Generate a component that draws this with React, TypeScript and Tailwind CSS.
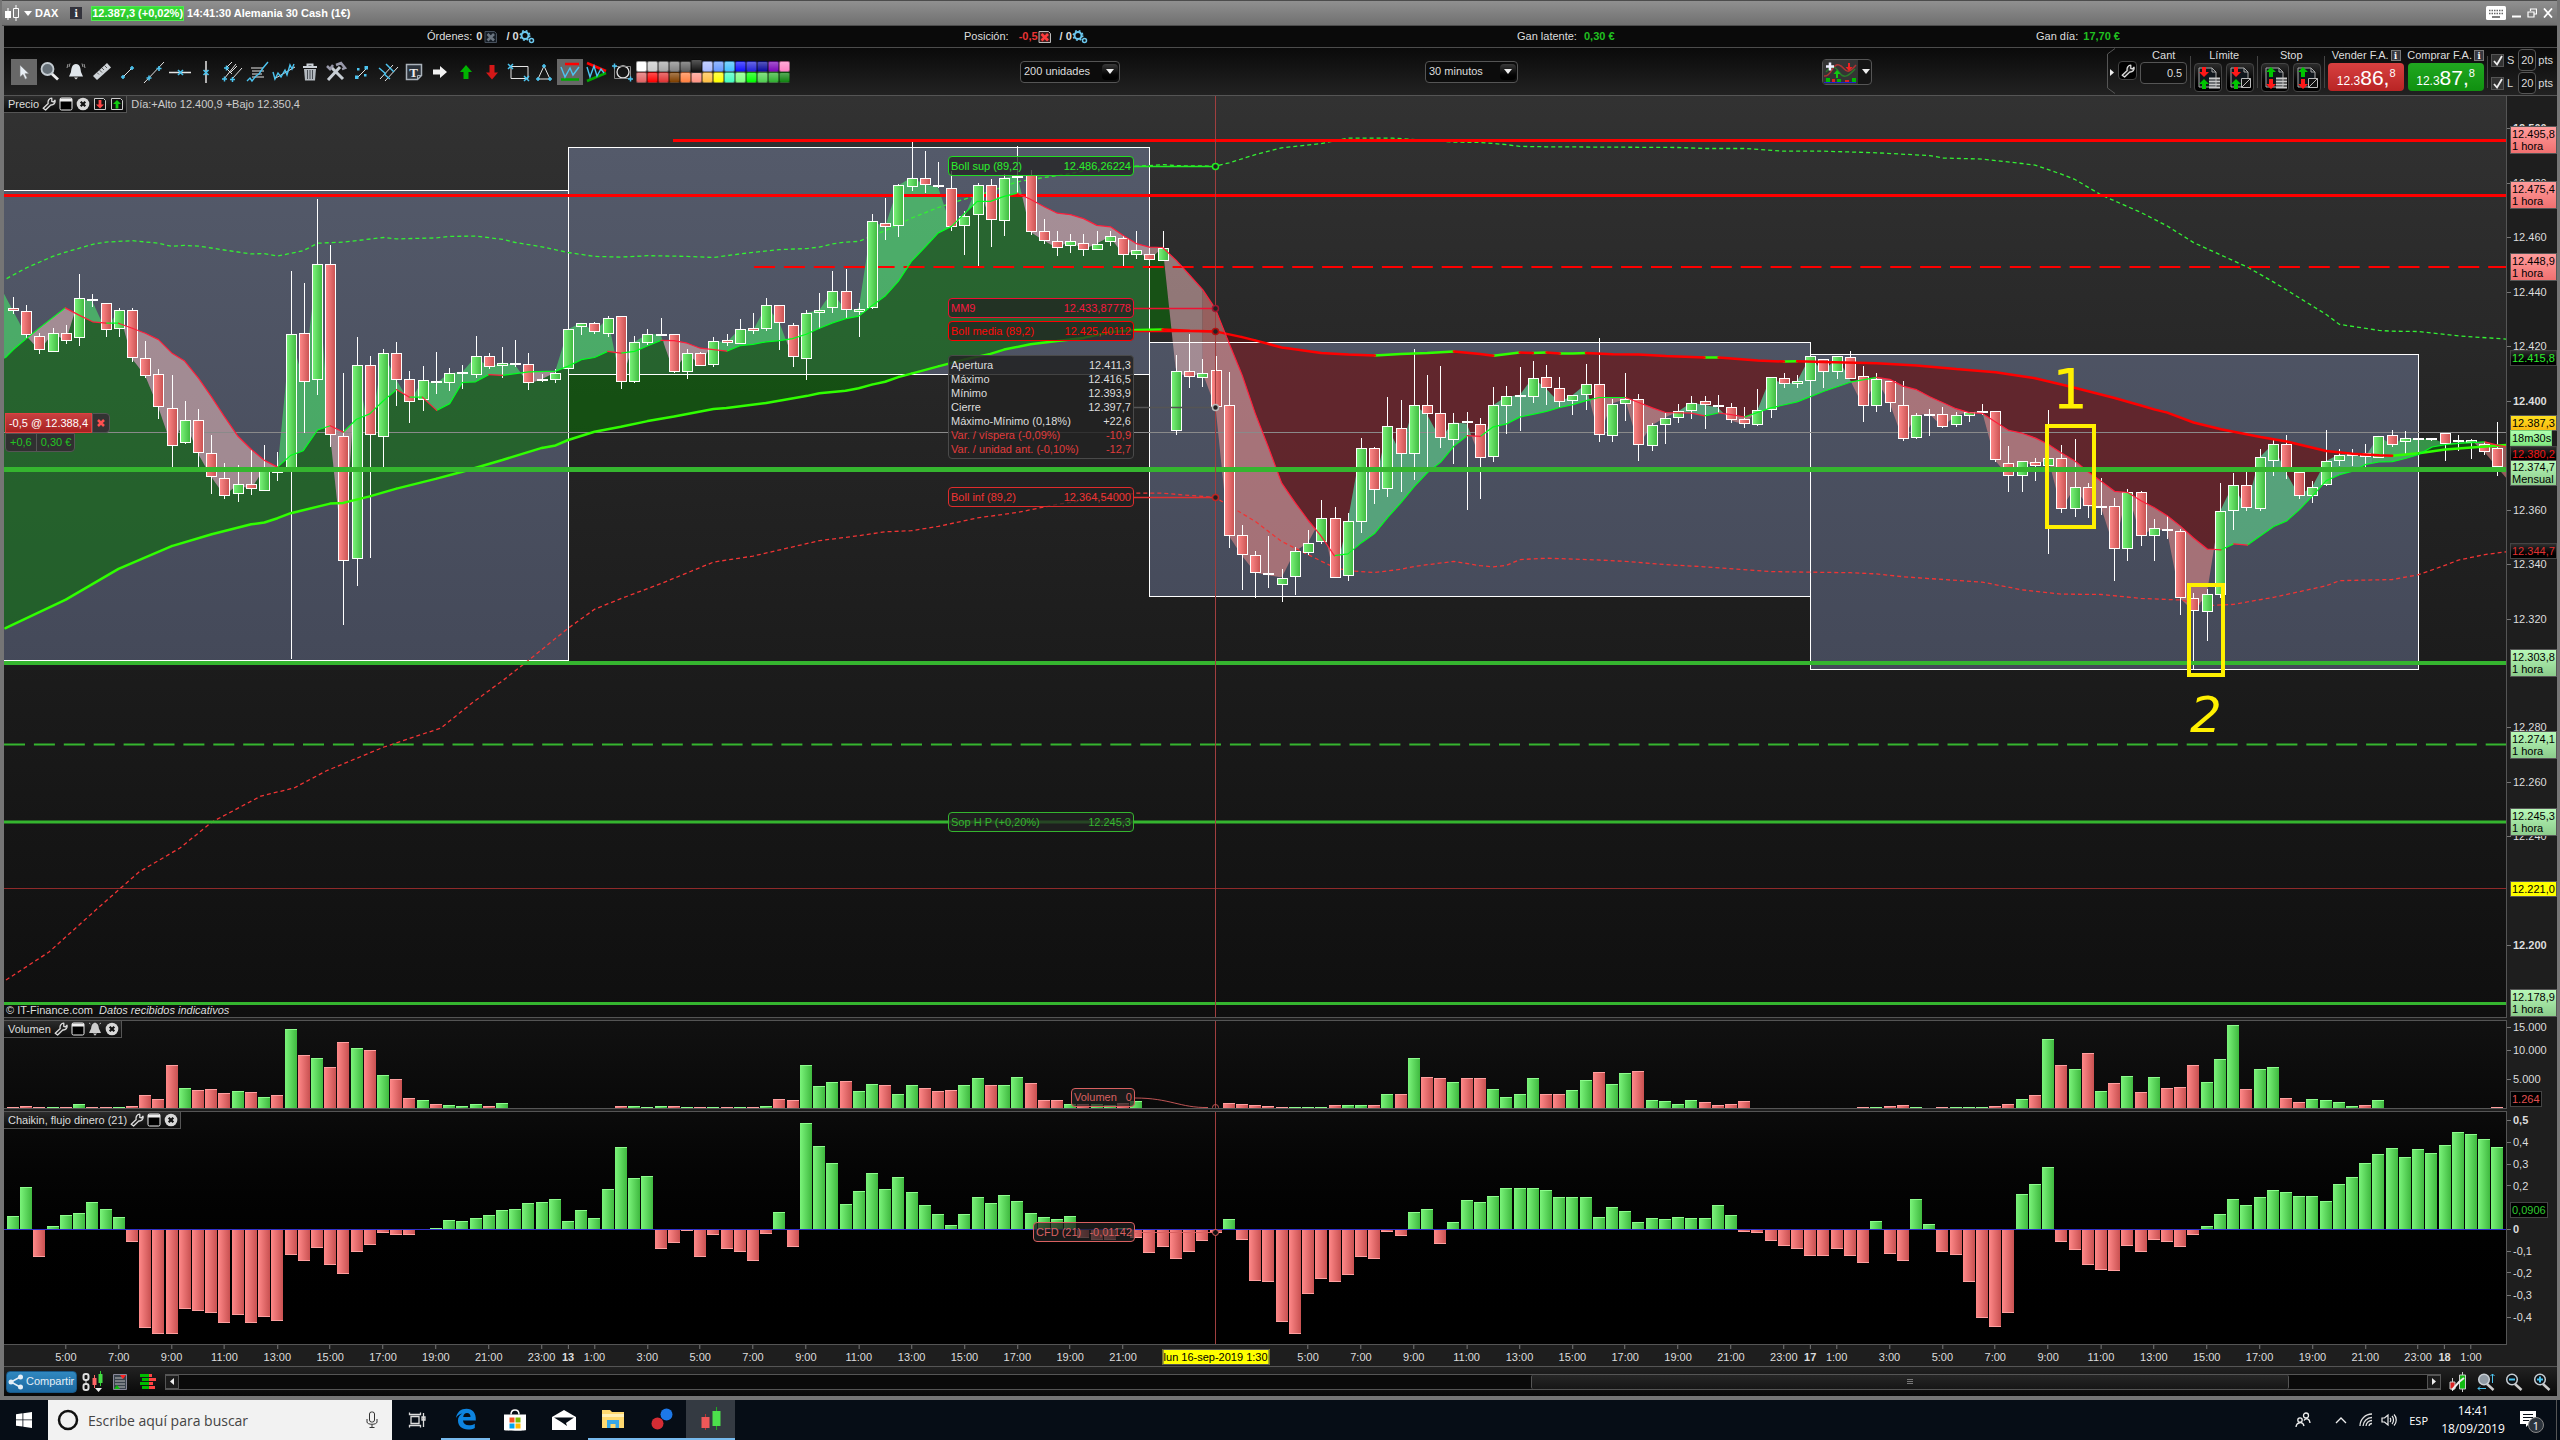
import type { CSSProperties, ReactNode } from 'react';

type Pt = [number, number];

interface Block {
  x0: number;
  y0: number;
  ky: number;
}

interface Candle {
  top: number;
  bottom: number;
  high: number;
  low: number;
  up: boolean;
}

/* Series are stored per block, each one with its own origin and scale */
const KX = 1.8233;
const A: Block = { x0: 0,    y0: 120, ky: 2.8 };
const B: Block = { x0: 850,  y0: 120, ky: 2.8 };
const C: Block = { x0: 1700, y0: 120, ky: 2.529 };

const slotX = (i: number) => 13 + 13.215 * i;

const nums = (s: string) => s.trim().split(/[\s,]+/).map(Number);

function track(block: Block, data: string): Pt[] {
  const n = nums(data);
  const out: Pt[] = [];
  for (let i = 0; i < n.length; i += 2) {
    out.push([block.x0 + n[i] / KX, block.y0 + n[i + 1] / block.ky]);
  }
  return out;
}

function candles(block: Block, data: string): Candle[] {
  return data.trim().split(';').map((row) => {
    const [side, ...v] = row.trim().split(' ');
    const [top, bottom, high, low] = v.map((n) => block.y0 + Number(n) / block.ky);
    return { top, bottom, high, low, up: side === 'g' };
  });
}

const CANDLES: Candle[] = [
  ...candles(A, `r 525 534 496 543;r 536 604 518 610;r 606 646 597 655;g 597 649 582 649;r 595 618 574 626;g 499 612 431 633;
    r 502 508 487 524;r 511 587 511 608;g 533 587 526 608;r 533 668 526 678;r 667 716 619 722;r 712 805 697 837;r 805 912 714 972;
    g 841 906 787 906;r 841 934 809 972;r 933 999 882 1047;r 1001 1052 960 1060;g 1020 1049 966 1070;r 1020 1035 925 1050;
    g 975 1038 910 1038;g 984 988 930 1011;g 600 987 423 1509;r 595 733 456 876;g 404 730 221 769;r 404 884 350 915;
    r 884 1234 708 1414;g 687 1231 608 1305;r 687 884 661 1226;g 651 887 641 972;r 651 727 622 801;r 726 789 703 848;
    g 729 786 689 815;r 732 738 650 767;g 709 738 694 758;g 706 710 685 753;g 662 716 605 722;r 662 693 652 697;
    g 679 688 636 722;r 681 686 616 692;r 684 738 652 756;g 726 728 712 734;g 707 727 697 736;g 586 699 586 703;
    g 567 579 567 602;r 567 593 565 600;g 555 601 549 607;r 550 735 548 752;g 622 735 605 735;g 600 626 586 630;
    g 600 604 554 606;r 600 705 598 709;g 651 705 641 724;r 653 688 650 690;g 618 685 608 692;r 615 623 600 633;
    g 584 626 557 628;r 581 590 541 600;g 519 587 498 590;r 519 568 519 644;r 575 665 569 691;g 539 668 531 728;
    g 533 542 484 585;g 480 528 423 540;r 480 534 417 558;g 528 537 512 608`),
  ...candles(B, `g 284 528 263 528;r 287 299 217 336;g 183 299 180 328;g 161 187 62 200;r 161 181 87 204;r 183 188 118 190;
    r 191 299 143 311;g 270 299 255 378;g 183 268 176 410;r 183 282 165 356;g 161 282 150 325;g 156 160 73 203;
    r 153 313 141 321;r 310 338 277 347;r 338 357 312 381;g 340 355 319 372;r 343 363 319 381;g 346 363 310 365;
    g 326 343 312 352;r 329 377 325 410;g 365 380 312 388;r 374 391 372 393;g 357 394 311 394;g 704 873 658 882;
    r 703 721 599 750;g 707 721 668 748;r 701 805 661 810;r 797 1164 706 1199;r 1163 1220 1134 1316;r 1217 1267 1207 1338;
    r 1269 1275 1165 1309;g 1281 1301 1257 1350;g 1208 1281 1196 1330;g 1183 1210 1148 1218;g 1115 1181 1064 1187;
    r 1113 1281 1084 1281;g 1124 1279 1101 1291;g 919 1127 891 1155;r 917 1035 915 1075;g 858 1035 776 1056;
    r 861 934 785 1042;g 797 934 641 1008;r 799 825 713 975;r 821 892 689 918;g 847 895 820 963;r 844 850 818 1092;
    r 850 945 835 1061;g 799 945 748 958;g 774 803 746 880;g 771 775 692 872;g 721 775 676 792;r 720 752 685 798;
    r 751 791 720 805;g 771 788 769 827;g 740 772 683 812;r 740 884 610 902;g 794 884 780 902;g 782 797 708 842;
    r 782 911 766 955;g 855 914 848 927;g 833 853 819 907;g 816 836 796 848;g 791 814 773 836;r 788 798 773 865`),
  ...candles(C, `r 721 727 695 742;r 727 760 716 766;r 757 770 727 780;g 734 773 680 775;g 651 735 651 754;r 653 669 640 678;
    g 661 669 646 678;g 598 661 598 664;r 605 639 605 678;g 598 639 596 654;r 600 656 584 656;r 648 725 621 765;
    g 656 725 640 738;r 659 715 659 738;r 722 808 659 812;g 747 805 740 807;g 743 745 730 798;r 744 776 726 780;
    g 747 773 739 776;g 739 750 739 765;g 737 740 718 747;r 737 861 737 864;r 868 902 824 941;g 863 902 863 942;
    r 866 875 855 913;g 856 875 733 1098;r 856 985 823 994;g 929 985 807 1004;r 929 977 917 1006;r 977 979 905 1000;
    r 975 1083 957 1166;g 940 1083 932 1115;r 940 1051 937 1078;g 1033 1053 1010 1115;r 1035 1040 1002 1060;
    r 1040 1210 1035 1251;r 1210 1243 1195 1390;g 1200 1246 1185 1318;g 990 1202 918 1208;g 922 987 893 1037;
    r 924 983 890 990;g 853 985 832 989;g 820 863 805 900;r 820 892 797 908;r 889 950 889 958;g 927 950 912 968;
    g 863 924 784 926;g 846 861 832 874;g 845 847 832 875;r 843 853 819 880;g 798 853 798 856;r 797 822 784 826;
    g 803 812 787 846;r 803 808 797 812;g 804 807 804 812;r 791 818 791 862;r 810 815 797 836;g 810 818 808 857;
    r 820 839 815 846;r 830 879 765 900`),
];

const MM9: Pt[] = [
  ...track(A, `10,665 25,642 48,612 72,582 119,526 145,547 169,565 193,569 216,569 241,583 265,597 289,615 313,652 336,674
    362,723 386,776 409,830 433,884 458,922 482,953 506,972 530,939 553,926 579,868 602,856 626,874 650,838 674,823 699,786
    723,755 746,776 770,776 796,813 820,794 843,735 867,733 891,713 916,715 964,705 1013,703 1036,689 1060,671 1084,665
    1108,648 1132,653 1157,648 1181,632 1205,617 1229,618 1253,625 1277,639 1325,647 1349,632 1373,628 1397,621 1421,618
    1445,612 1470,600 1494,583 1518,568 1542,556`),
  ...track(B, `16,549 40,520 64,493 88,452 112,396 137,356 161,316 185,298 208,263 232,228 256,228 281,214 305,205 329,222
    354,243 378,261 402,265 426,276 450,295 475,299 499,324 522,346 546,356 570,357 595,393 619,434 643,475 666,528 691,624
    715,714 739,822 763,917 787,1016 811,1070 835,1120 859,1165 883,1220 908,1215 932,1184 957,1157 981,1112 1004,1073
    1029,1026 1053,987 1077,958 1101,913 1125,884 1149,886 1173,859 1197,851 1221,832 1245,824 1270,816 1294,805 1318,797
    1342,786 1366,777 1390,777 1414,777 1438,791 1463,806 1487,819 1534,821`),
  ...track(C, `8,748 34,741 57,745 81,751 129,728 177,713 226,686 274,663 322,651 346,656 370,673 395,682 419,700 443,715
    467,730 491,740 515,742 539,764 563,785 587,792 611,804 635,820 659,842 683,862 708,890 732,914 756,939 780,942 804,963
    828,980 852,1001 876,1027 900,1057 925,1085 950,1087 973,1072 998,1075 1046,1028 1070,1014 1094,984 1118,949 1142,912
    1166,897 1190,888 1214,871 1238,865 1262,864 1286,856 1310,846 1335,827 1359,821 1383,818 1407,816 1431,814 1455,823 1470,826`),
];

const MEDIA: Pt[] = [
  ...track(A, `10,1423 120,1343 216,1257 313,1193 386,1160 458,1132 482,1127 506,1115 530,1101 602,1074 626,1072 674,1054
    723,1032 796,1004 843,985 916,952 988,918 1013,911 1036,896 1084,873 1132,859 1181,843 1229,830 1301,809 1325,806
    1397,792 1470,773 1494,765 1542,758`),
  ...track(B, `16,751 40,741 64,733 88,720 112,710 161,690 208,671 256,655 281,643 329,628 378,619 426,610 475,594 522,588
    570,587 619,590 666,592 715,608 739,617 787,637 811,642 859,652 908,657 957,659 1004,655 1053,652 1101,648 1149,655
    1173,660 1221,651 1245,652 1270,651 1294,654 1318,654 1342,652 1390,656 1438,657 1487,661`),
  ...track(C, `8,601 34,601 105,608 153,611 177,610 226,612 322,615 395,621 467,630 539,638 587,648 611,653 659,669 683,677
    756,703 804,722 828,732 852,740 900,765 950,782 1022,802 1070,813 1142,837 1190,844 1238,848 1262,849 1310,843 1359,833
    1407,828 1470,822`),
];

const BOLL_SUP: Pt[] = [
  ...track(A, `12,444 48,414 96,382 120,370 169,348 193,342 241,338 289,345 313,354 336,351 362,353 409,364 458,375 482,374
    506,381 553,366 579,345 626,342 699,329 723,333 796,330 820,326 867,325 916,334 940,343 988,355 1036,371 1084,382
    1132,384 1181,380 1253,382 1301,385 1349,375 1421,363 1470,360 1494,356 1518,347 1542,342`),
  ...track(B, `16,340 64,310 112,275 161,245 208,222 256,200 305,173 354,161 402,150 450,135 540,128 572,125 595,128 666,129
    691,120 739,97 787,78 859,66 908,51 990,51 1101,62 1149,63 1197,69 1221,74 1270,75 1510,77`),
  ...track(C, `8,72 81,72 153,79 226,79 322,83 419,90 443,96 515,99 587,110 611,114 659,137 683,150 732,190 804,234 852,268
    900,310 998,372 1046,410 1142,492 1166,517 1238,532 1262,534 1310,535 1383,546 1470,554`),
];

const BOLL_INF: Pt[] = [
  [6, 980], [49, 952], [98, 908], [139, 872], [180, 848], [212, 822], [261, 796], [294, 788], [326, 771],
  [384, 747], [441, 728], [472, 703],
  ...track(A, `918,1568 970,1505 1036,1423 1084,1370 1132,1340 1205,1298 1301,1238 1373,1221 1494,1178`),
  ...track(B, `16,1164 64,1153 112,1150 161,1138 232,1114 305,1099 378,1076 450,1060 522,1045 570,1045 619,1051 666,1057
    739,1124 787,1180 835,1217 883,1253 908,1262 957,1267 1004,1258 1029,1250 1101,1236 1149,1248 1173,1251 1197,1247
    1221,1231 1270,1227 1366,1232 1414,1236 1487,1245`),
  ...track(C, `8,1130 129,1142 274,1145 322,1148 370,1155 443,1162 515,1169 587,1188 659,1199 732,1200 804,1210 876,1214
    925,1228 973,1225 1046,1207 1142,1178 1166,1165 1262,1162 1310,1150 1359,1126 1383,1113 1431,1099 1470,1092`),
];

/* Negative = red bar */
const VOLUME = nums(`-1 -2 -1 1 -1 4 -1 -1 1 -2 -13 -9 -43 20 -18 -19 -15 17 -16 11 -13 79 -53 50 -41 -66 60 -58 33 -29 -10 8 -4 3
  2 4 -2 5 0 0 0 0 0 0 0 0 -2 2 1 2 -2 1 -1 1 -1 1 -1 2 -9 -8 43 22 26 -27 17 24 -23 14 23 -20 -17 -18 23 30 -23 23 31 -25 -8 -8
  4 -4 4 3 -5 7 0 0 0 0 0 0 -5 -4 -3 -2 -1 1 1 1 -3 3 3 -3 14 -14 50 -31 -30 26 -30 -30 19 11 14 30 -14 -14 18 28 -36 24 35 -37
  8 7 4 8 -6 -3 -4 -7 0 0 0 0 0 0 0 0 -1 1 -2 -3 1 0 -1 1 1 1 -2 -4 9 -13 69 -43 39 -55 17 -25 32 -16 31 -20 -21 -43 26 49 83
  -19 39 41 -10 -6 9 8 6 2 -3 8 0 0 0 0 0 0 0 0 -1`);

const CHAIKIN = nums(`13 42 -27 3 14 16 27 20 12 -12 -98 -104 -104 -79 -81 -83 -93 -85 -93 -87 -91 -25 -31 -18 -35 -44 -22 -15 -3
  -5 -5 0 1 9 8 11 14 19 20 26 27 30 8 19 11 40 82 51 53 -19 -13 -1 -27 -5 -19 -22 -31 -4 17 -17 106 83 66 25 38 56 40 52 37 24
  15 4 15 32 26 34 28 16 12 10 13 -8 -10 -10 1 -8 -23 -17 -29 -22 -11 -3 10 -10 -51 -52 -92 -104 -64 -49 -52 -45 -27 -29 -2 -6
  17 20 -14 7 29 27 33 41 41 41 39 32 32 32 12 22 18 7 11 10 12 11 11 24 14 -2 -3 -11 -16 -19 -26 -26 -19 -26 -33 8 -24 -31 30
  5 -22 -25 -52 -88 -97 -83 35 45 62 -12 -20 -35 -40 -41 -16 -22 -10 -12 -17 -5 3 15 30 24 32 39 37 33 33 28 45 52 66 75 81 72
  80 76 84 97 95 90 82`);

const SESSIONS = [
  { x: 3,      y: 190.5, w: 565.5, h: 470 },
  { x: 568.5,  y: 147.5, w: 581,   h: 227 },
  { x: 1149.5, y: 342.5, w: 661,   h: 254 },
  { x: 1810.5, y: 354.5, w: 608,   h: 315 },
];

function valueAt(line: Pt[], x: number) {
  let k = 1;
  while (k < line.length - 1 && line[k][0] < x) k++;
  const [x1, y1] = line[k - 1];
  const [x2, y2] = line[k];
  return y1 + ((y2 - y1) * (x - x1)) / (x2 - x1);
}

const CLOSES: Pt[] = CANDLES.map((c, i) => [slotX(i), c.up ? c.top : c.bottom]);

/* Shaded areas: price against MM9, and the rest up to the Bollinger mean */
function buildBands() {
  const bands: { fill: string; d: string }[] = [];
  const run = (pick: (x: number) => { fill: string; a: number; b: number }) => {
    let fill = '';
    let upper: string[] = [];
    let lower: string[] = [];
    const flush = () => {
      if (upper.length > 1) bands.push({ fill, d: `M${upper.join('L')}L${lower.reverse().join('L')}Z` });
    };
    for (let x = 4; x <= 2506; x += 1.5) {
      const p = pick(x);
      const u = `${x.toFixed(1)} ${p.a.toFixed(1)}`;
      const l = `${x.toFixed(1)} ${p.b.toFixed(1)}`;
      if (p.fill !== fill) {
        if (fill) { upper.push(u); lower.push(l); }
        flush();
        fill = p.fill;
        upper = [];
        lower = [];
      }
      upper.push(u);
      lower.push(l);
    }
    flush();
  };

  run((x) => {
    const mean = valueAt(MEDIA, x);
    const ma = valueAt(MM9, x);
    const price = valueAt(CLOSES, x);
    const bull = (ma + price) / 2 < mean;
    const near = bull ? Math.min(mean, Math.max(ma, price)) : Math.max(mean, Math.min(ma, price));
    return { fill: bull ? 'rgba(9,112,5,0.56)' : 'rgba(112,10,10,0.6)', a: mean, b: near };
  });
  run((x) => {
    const mean = valueAt(MEDIA, x);
    const ma = valueAt(MM9, x);
    const price = valueAt(CLOSES, x);
    const bull = (ma + price) / 2 < mean;
    const above = price < ma;
    const fill = above
      ? bull ? 'rgba(73,255,108,0.51)' : 'rgba(100,243,151,0.51)'
      : bull ? 'rgba(246,195,194,0.51)' : 'rgba(255,149,145,0.51)';
    return { fill, a: ma, b: price };
  });
  return bands;
}

const BANDS = buildBands();

const path = (pts: Pt[]) => 'M' + pts.map(([x, y]) => `${x.toFixed(1)} ${y.toFixed(1)}`).join('L');

function SlopeLine({ pts, up, down, width }: { pts: Pt[]; up: string; down: string; width: number }) {
  let ups = '';
  let downs = '';
  for (let i = 1; i < pts.length; i++) {
    const seg = path([pts[i - 1], pts[i]]);
    if (pts[i][1] <= pts[i - 1][1]) ups += seg;
    else downs += seg;
  }
  return (
    <g fill="none" strokeWidth={width} strokeLinecap="round">
      <path d={ups} stroke={up} />
      <path d={downs} stroke={down} />
    </g>
  );
}

function Gradients({ id }: { id: string }) {
  return (
    <defs>
      <linearGradient id={`${id}-up`}>
        <stop offset="0" stopColor="#7bf47b" />
        <stop offset="1" stopColor="#3fb93f" />
      </linearGradient>
      <linearGradient id={`${id}-down`}>
        <stop offset="0" stopColor="#ff8989" />
        <stop offset="1" stopColor="#c95151" />
      </linearGradient>
      <linearGradient id={`${id}-session`} gradientUnits="userSpaceOnUse" x1="0" y1="147" x2="0" y2="670">
        <stop offset="0" stopColor="#545a6a" />
        <stop offset="1" stopColor="#444959" />
      </linearGradient>
    </defs>
  );
}

function PriceChart() {
  return (
    <svg viewBox="4 96 2502 921" preserveAspectRatio="none" className="absolute inset-0 w-full h-full">
      <Gradients id="p" />
      {SESSIONS.map((s) => (
        <rect key={s.x} x={s.x} y={s.y} width={s.w} height={s.h} fill="url(#p-session)" />
      ))}
      {BANDS.map((b, i) => <path key={i} d={b.d} fill={b.fill} />)}
      {SESSIONS.map((s) => (
        <rect key={s.x} x={s.x} y={s.y} width={s.w} height={s.h} fill="none" stroke="#fff" />
      ))}

      <path d={path(BOLL_SUP)} fill="none" stroke="#33f033" strokeWidth="1.3" strokeDasharray="4 3" />
      <path d={path(BOLL_INF)} fill="none" stroke="#f03434" strokeWidth="1.3" strokeDasharray="4 3" />

      {/* Niveles */}
      <path d="M4 432.5H2506" stroke="#8a8a8a" />
      <path d="M4 888.5H2506" stroke="#8f2a2a" />
      <path d="M673 140.5H2506M4 195.5H2506" stroke="#ff0000" strokeWidth="3" />
      <path d="M754 267H2506" stroke="#ff0000" strokeWidth="2" strokeDasharray="21 8.9" />

      <g shapeRendering="crispEdges" stroke="#fff">
        {CANDLES.map((c, i) => {
          const x = Math.round(slotX(i)) + 0.5;
          const top = Math.round(c.top) + 0.5;
          return (
            <g key={i}>
              <path d={`M${x} ${c.high}V${c.low}`} />
              <rect x={x - 5} y={top} width={10} height={Math.max(1, Math.round(c.bottom - c.top) - 1)}
                    fill={c.up ? 'url(#p-up)' : 'url(#p-down)'} />
            </g>
          );
        })}
      </g>

      <SlopeLine pts={MEDIA} up="#30ff00" down="#ff0000" width={2.5} />
      <SlopeLine pts={MM9} up="#00ff1e" down="#ff1f3c" width={1.2} />

      <path d="M4 469.5H2506" stroke="#35b52f" strokeWidth="5" />
      <path d="M4 663H2506" stroke="#35b52f" strokeWidth="4" />
      <path d="M4 822H2506M4 1003.5H2506" stroke="#35b52f" strokeWidth="3" />
      <path d="M4 744.5H2506" stroke="#35b52f" strokeWidth="2" strokeDasharray="21 8.9" />

      {/* Cursor */}
      <path d="M1215.5 96V1017" stroke="#a03f3f" />
      <g strokeWidth="1.5" fill="#222">
        <path d="M1133 166.5H1212" stroke="#22ee22" />
        <circle cx="1215.5" cy="166.5" r="3" stroke="#22ee22" />
        <path d="M1133 308.5H1212" stroke="#ee1133" />
        <circle cx="1215.5" cy="308.5" r="3" stroke="#a01530" />
        <path d="M1133 331.5H1212" stroke="#ff0000" />
        <circle cx="1215.5" cy="331.5" r="3" stroke="#b01010" />
        <path d="M1133 407.5H1212" stroke="#555" />
        <circle cx="1215.5" cy="407.5" r="3" stroke="#bbb" />
        <path d="M1133 497.5H1212" stroke="#e03030" />
        <circle cx="1215.5" cy="497.5" r="3" stroke="#c02525" />
      </g>

      {/* Anotaciones */}
      <g fill="none" stroke="#fff000" strokeWidth="4">
        <rect x="2047" y="426" width="47" height="101" />
        <rect x="2189" y="585" width="34" height="90" />
      </g>
      <g fill="#fff000" fontFamily="DejaVu Sans, sans-serif" textAnchor="middle">
        <text x="2070" y="408" fontSize="56">1</text>
        <text x="2206" y="732" fontSize="50" fontStyle="italic">2</text>
      </g>
    </svg>
  );
}

function BarChart({ id, viewBox, base, values, cursorTo }: {
  id: string; viewBox: string; base: number; values: number[]; cursorTo: [number, number];
}) {
  const signed = id === 'c';
  return (
    <svg viewBox={viewBox} preserveAspectRatio="none" className="absolute inset-0 w-full h-full">
      <Gradients id={id} />
      <g shapeRendering="crispEdges">
        {values.map((v, i) => {
          if (v === 0) return null;
          const h = Math.abs(v);
          const x = Math.round(slotX(i)) - 6;
          const y = signed && v < 0 ? base + 1 : base - h;
          return (
            <g key={i}>
              <rect x={x} y={y} width={12} height={h} fill={v > 0 ? `url(#${id}-up)` : `url(#${id}-down)`} />
              <rect x={x} y={signed && v < 0 ? y + h - 1 : y} width={12} height={1} fill={v > 0 ? '#8dfc8d' : '#ffa0a0'} />
            </g>
          );
        })}
      </g>
      {signed && <path d="M4 1229.5H2506" stroke="#3030c8" />}
      <path d={`M1215.5 ${cursorTo[0]}V${cursorTo[1]}`} stroke="#a03f3f" />
      {signed ? (
        <g stroke="#d86060" fill="#111">
          <path d="M1135 1232.5H1212" />
          <circle cx="1215.5" cy="1232.5" r="3" />
        </g>
      ) : (
        <g stroke="#c05555" fill="none">
          <path d="M1135 1098C1170 1098 1180 1108 1208 1107.5" />
          <circle cx="1215.5" cy="1107.5" r="3" />
        </g>
      )}
    </svg>
  );
}

/* Chart coordinates to a place inside its panel */
const at = (x: number, y: number, top: number, height: number): CSSProperties => ({
  left: `${((x - 4) / 2502) * 100}%`,
  top: `${((y - top) / height) * 100}%`,
});

interface ReadoutProps {
  label: string;
  value: string;
  y: number;
  tone: string;
}

function Readout({ label, value, y, tone }: ReadoutProps) {
  return (
    <div style={at(948, y, 96, 921)}
         className={`absolute flex h-5 w-[186px] items-center justify-between rounded-sm border bg-[#222222]/75 px-0.5 ${tone}`}>
      <span>{label}</span>
      <span>{value}</span>
    </div>
  );
}

const READOUTS: ReadoutProps[] = [
  { label: 'Boll sup (89,2)',   value: '12.486,26224', y: 156, tone: 'border-[#22dd22] text-[#2cf02c]' },
  { label: 'MM9',               value: '12.433,87778', y: 298, tone: 'border-[#ee1133] text-[#f81840]' },
  { label: 'Boll media (89,2)', value: '12.425,40112', y: 321, tone: 'border-[#ff0000] text-[#ff0808]' },
  { label: 'Boll inf (89,2)',   value: '12.364,54000', y: 487, tone: 'border-[#e02c2c] text-[#f03434]' },
  { label: 'Sop H P (+0,20%)',  value: '12.245,3',     y: 812, tone: 'border-[#35b52f] text-[#35b52f]' },
];

const OHLC = [
  ['Apertura', '12.411,3'],
  ['Máximo', '12.416,5'],
  ['Mínimo', '12.393,9'],
  ['Cierre', '12.397,7'],
  ['Máximo-Mínimo (0,18%)', '+22,6'],
  ['Var. / víspera (-0,09%)', '-10,9'],
  ['Var. / unidad ant. (-0,10%)', '-12,7'],
];

interface Tick { y: number; label: string; bold?: boolean }

const PRICE_TICKS: Tick[] = [
  { y: 128, label: '12.500', bold: true }, { y: 183, label: '12.480' }, { y: 237, label: '12.460' },
  { y: 292, label: '12.440' }, { y: 346, label: '12.420' }, { y: 401, label: '12.400', bold: true },
  { y: 510, label: '12.360' }, { y: 564, label: '12.340' }, { y: 619, label: '12.320' },
  { y: 727, label: '12.280' }, { y: 782, label: '12.260' }, { y: 836, label: '12.240' },
  { y: 945, label: '12.200', bold: true },
];

const VOLUME_TICKS: Tick[] = [
  { y: 1027, label: '15.000' }, { y: 1050, label: '10.000' }, { y: 1079, label: '5.000' },
];

const CHAIKIN_TICKS: Tick[] = [
  { y: 1120, label: '0,5', bold: true }, { y: 1142, label: '0,4' }, { y: 1164, label: '0,3' }, { y: 1186, label: '0,2' },
  { y: 1229, label: '0', bold: true }, { y: 1251, label: '-0,1' }, { y: 1273, label: '-0,2' }, { y: 1295, label: '-0,3' },
  { y: 1317, label: '-0,4' },
];

const RED_TAG    = 'h-7 w-[47px] border-[#555] bg-linear-to-b from-[#ff9c9c] to-[#f07070] text-black';
const GREEN_TAG  = 'h-7 w-[47px] border-[#555] bg-linear-to-b from-[#b8f8b8] to-[#8ccc8c] text-black';
const DARK_TAG   = 'h-4 w-[47px] border-[#444] bg-linear-to-b from-[#303030] to-black';

const TAGS: { y: number; text: string; sub?: string; tone: string }[] = [
  { y: 126, text: '12.495,8', sub: '1 hora', tone: RED_TAG },
  { y: 181, text: '12.475,4', sub: '1 hora', tone: RED_TAG },
  { y: 253, text: '12.448,9', sub: '1 hora', tone: RED_TAG },
  { y: 350, text: '12.415,8', tone: `${DARK_TAG} text-[#2cf02c]` },
  { y: 446, text: '12.380,2', tone: `${DARK_TAG} text-[#f01515]` },
  { y: 415, text: '12.387,3', tone: 'h-4 w-[47px] border-[#555] bg-linear-to-b from-[#ffe020] to-[#f8b810] text-black' },
  { y: 460, text: '12.374,7', sub: 'Mensual', tone: 'h-[26px] w-[47px] border-[#555] bg-linear-to-b from-[#b8f8b8] to-[#8ccc8c] text-black' },
  { y: 430, text: '18m30s', tone: 'h-4 w-[42px] border-[#7c7] bg-linear-to-b from-[#b0ffb0] to-[#80e880] text-black' },
  { y: 543, text: '12.344,7', tone: `${DARK_TAG} text-[#e03030]` },
  { y: 649, text: '12.303,8', sub: '1 hora', tone: GREEN_TAG },
  { y: 731, text: '12.274,1', sub: '1 hora', tone: GREEN_TAG },
  { y: 808, text: '12.245,3', sub: '1 hora', tone: GREEN_TAG },
  { y: 881, text: '12.221,0', tone: 'h-4 w-[47px] border-[#555] bg-[#ffff00] text-black' },
  { y: 989, text: '12.178,9', sub: '1 hora', tone: GREEN_TAG },
];

function Axis({ ticks, top, height, children }: { ticks: Tick[]; top: number; height: number; children?: ReactNode }) {
  const pct = (y: number) => ({ top: `${((y - top) / height) * 100}%` });
  return (
    <div className="relative w-[50px] shrink-0 bg-[#1e1e1e]">
      {ticks.map((t) => (
        <div key={t.label} style={pct(t.y)}
             className={`absolute left-0 flex -translate-y-1/2 items-center gap-0.5 leading-3 text-[#ddd] ${t.bold ? 'font-bold' : ''}`}>
          <span className="h-px w-1 bg-[#777]" />
          {t.label}
        </div>
      ))}
      {children}
    </div>
  );
}

/* Iconos pequeños */
function Wrench({ className = 'h-3.5 w-3.5' }: { className?: string }) {
  return (
    <svg viewBox="0 0 14 14" className={className} fill="#222" stroke="#ddd" strokeWidth="1.3" strokeLinejoin="round">
      <path d="M1.2 11.2l5-4.6C5.500 4 7.200 1.200 9.800 1.200v3.200l1.600 0.600 1.600-1.800c0.600 3-1.400 5-4.200 4.800l-5.200 5z" />
    </svg>
  );
}

function WindowIcon() {
  return (
    <svg viewBox="0 0 14 14" className="h-3.5 w-3.5">
      <rect x="1" y="1" width="12" height="12" rx="1.5" fill="#000" stroke="#eee" />
      <path d="M1 4.500V1.500h12v3z" fill="#eee" />
    </svg>
  );
}

function CloseIcon() {
  return (
    <svg viewBox="0 0 14 14" className="h-3.5 w-3.5">
      <circle cx="7" cy="7" r="6.300" fill="#d8d8d8" />
      <path d="M4.700 4.700l4.600 4.600M9.300 4.700l-4.600 4.600" stroke="#111" strokeWidth="2.200" />
    </svg>
  );
}

function BellSmall() {
  return (
    <svg viewBox="0 0 14 14" className="h-3.5 w-3.5" fill="#ccc">
      <path d="M7 0.500c3 1 3.600 3 3.900 6l2.100 4.500H1l2.100-4.500C3.400 3.500 4 1.500 7 0.500zM5 11.500h4L7 13.800z" />
      <path d="M1 1l1.500 1M13 1l-1.500 1" stroke="#bbb" />
    </svg>
  );
}

function SheetArrow({ down }: { down?: boolean }) {
  return (
    <svg viewBox="0 0 14 14" className="h-3.5 w-3.5">
      <path d="M1.500 1.500h9l2 2v9h-11z" fill="#111" stroke="#ccc" />
      {down
        ? <path d="M7 11.500L3 7.500h2.600v-4.500h2.800v4.500H11z" fill="#f44" />
        : <path d="M7 3L3 7h2.600v4.500h2.800V7H11z" fill="#1c1" />}
    </svg>
  );
}

function Gears() {
  return (
    <svg viewBox="0 0 16 14" className="h-3.5 w-4" fill="none" stroke="#6cc8ee">
      <circle cx="6" cy="5.500" r="3.500" strokeWidth="2" />
      <circle cx="6" cy="5.500" r="4.800" strokeWidth="1.500" strokeDasharray="1.800 2" />
      <circle cx="12.500" cy="10.500" r="2" strokeWidth="1.500" />
    </svg>
  );
}

function CancelSheet({ red }: { red?: boolean }) {
  return (
    <svg viewBox="0 0 14 12" className="h-3 w-3.5">
      <path d="M1 0.500h9.500l2 2v9H1z" fill={red ? '#402020' : '#151c24'} stroke={red ? '#bbb' : '#46505c'} />
      <path d="M3.500 3l6.500 6.500M10 3L3.500 9.500" stroke={red ? '#ff3b3b' : '#6b7580'} strokeWidth="2.600" />
    </svg>
  );
}

const S = '#e4e4e4';
const K = '#4cc4f0';

const TOOLS: { name: string; on?: boolean; art: ReactNode }[] = [
  { name: 'Cursor', on: true, art: <path d="M9 6v12l3-2.500 2.200 4.700 2-1L14 14.700h4z" fill="#e8eef4" stroke="#777" strokeWidth="0.600" /> },
  { name: 'Zoom', art: <><path d="M14 14l7 6.500" stroke="#eee" strokeWidth="2.800" /><circle cx="10.500" cy="10" r="6" fill="#667078" stroke="#c4ccd2" strokeWidth="1.800" /></> },
  { name: 'Alarma', art: <><path d="M13 5c4 0 4.500 4 5 8l2 4.500H6L8 13c0.500-4 1-8 5-8z" fill="#dfe5ea" /><path d="M11 18.500h4l-2 2z" fill="#ddd" /><path d="M5 5L4 9M7 4.500L6 8M21 5l1 4M19 4.500L20 8" stroke="#999" fill="none" /></> },
  { name: 'Regla', art: <><path d="M4 17L18 4l4 4.500L8 21z" fill="#cfd4d8" /><path d="M8 13.500l2 2M10.500 11l2.500 2.500M13 9l2 2M15.500 6.500l2.500 2.500" stroke="#555" /></> },
  { name: 'Segmento', art: <><path d="M8 18L17 9" stroke={S} /><path d="M6 18h4M8 16v4M15 9h4M17 7v4" stroke={K} strokeWidth="1.600" /></> },
  { name: 'Línea', art: <><path d="M3 24L23 3" stroke={S} /><path d="M5.500 19h5M8 16.500v5M15.500 9.500h5M18 7v5" stroke={K} strokeWidth="1.600" /></> },
  { name: 'Horizontal', art: <><path d="M2 13.500h22" stroke={S} strokeWidth="1.500" /><path d="M11 11l5 5M16 11l-5 5" stroke={K} strokeWidth="1.600" /></> },
  { name: 'Vertical', art: <><path d="M13 2v22" stroke={S} strokeWidth="1.500" /><path d="M10.500 11l5 5M15.500 11l-5 5" stroke={K} strokeWidth="1.600" /></> },
  { name: 'Tridente', art: <><path d="M7 9L13 3M5 20L17 5M12 13L18 7M13 20L23 9" stroke={S} /><path d="M7 9l6 6" stroke={S} /><path d="M5 9h5M7.500 6.500v5M3 20h5M5.500 17.500v5M11 20.500h5M13.500 18v5" stroke={K} strokeWidth="1.500" /></> },
  { name: 'Fibonacci', art: <><path d="M6 9h12M7 12h12M7 15h10M7 18h12" stroke={S} /><path d="M2 22l3-3 2 3 4-5 3-2 4-6 5-6" stroke={K} fill="none" strokeWidth="1.400" /></> },
  { name: 'Regresión', art: <><path d="M3 20L24 8" stroke={S} /><path d="M2 13l2 7 3-6 3 4 4-7 2 5 3-10 2 4 2-5" stroke={K} fill="none" strokeWidth="1.400" /></> },
  { name: 'Borrar', art: <><path d="M6 8h14M10.500 7.500V5.500h5v2" stroke="#ccd2d8" strokeWidth="2" fill="none" /><path d="M7 10h12l-1 11.500H8z" fill="#b4bac0" /><path d="M10.500 11v9M13 11v9M15.500 11v9" stroke="#4a4f55" /></> },
  { name: 'Opciones', art: <><path d="M5 21L17 8M8 8l12 12" stroke="#c8ced4" strokeWidth="3" /><path d="M13 6l5-2 4 5-3 1M4 7l3 3 3-4" stroke="#99a" strokeWidth="2.500" fill="none" /></> },
  { name: 'Nodos', art: <><path d="M8 19L19 8" stroke={S} /><path d="M6 16.500h3.500V20H6zM15.500 7H19v3.500h-3.500zM8 9h2.500v2.500H8zM15 15h2.500v2.500H15z" fill={K} /></> },
  { name: 'Canal', art: <><path d="M5 20L18 6M10 22L23 8" stroke={S} /><path d="M4 9l7 6M11 5l8 8M9 15l6 5" stroke={K} strokeWidth="1.500" /></> },
  { name: 'Texto', art: <><path d="M5.500 5.500h15v11l-4 4h-11z" fill="#2c333c" stroke="#aab2ba" strokeWidth="1.500" /><path d="M20.500 16.500h-4v4" stroke="#aab2ba" fill="none" /><text x="12.500" y="17.500" fontSize="13" fontWeight="bold" fontFamily="Liberation Serif, serif" fill="#eee" textAnchor="middle">T</text></> },
  { name: 'Flecha', art: <path d="M6 10.500h7V7l7 6-7 6v-3.500H6z" fill="#f2f2f2" /> },
  { name: 'Flecha arriba', art: <path d="M13 6l6 7h-3.500v7h-5v-7H7z" fill="#00b400" /> },
  { name: 'Flecha abajo', art: <path d="M13 20.500l-6-7h3.500V6h5v7.500H19z" fill="#d41818" /> },
  { name: 'Rectángulo', art: <><path d="M6 7.500h17v12H6z" stroke={S} fill="none" /><path d="M3 5l5 5M8 5l-5 5M19 17l5 5M24 17l-5 5" stroke={K} strokeWidth="1.500" /></> },
  { name: 'Triángulo', art: <><path d="M13 7l6 13H7z" stroke={S} fill="none" /><path d="M11 7h4M13 5v4M5 20h4M7 18v4M17 20h4M19 18v4" stroke={K} strokeWidth="1.500" /></> },
  { name: 'Soportes', on: true, art: <><path d="M8 5h14" stroke="#f00" strokeWidth="2.500" /><path d="M4 20.500h18" stroke="#00a800" strokeWidth="2.500" /><path d="M4 8l4 10 5-9 3 7 6-8" stroke={K} fill="none" strokeWidth="1.400" /></> },
  { name: 'Triángulos auto', art: <><path d="M4 4l19 8" stroke="#f00" strokeWidth="2.500" /><path d="M4 22l19-8" stroke="#00a800" strokeWidth="2.500" /><path d="M4 8l3 10 4-11 3 10 4-7 3 4" stroke={K} fill="none" strokeWidth="1.400" /></> },
  { name: 'Elipse', art: <><circle cx="14" cy="13" r="6" stroke={S} fill="none" strokeWidth="1.300" /><path d="M5.500 7.500h16v12h-16z" stroke="#888" fill="none" /><path d="M3 7h5M5.500 4.500v5M19 20h5M21.500 17.500v5" stroke={K} strokeWidth="1.500" /></> },
];

const PALETTE = [
  ['#ffffff', '#cccccc', '#a8a8a8', '#848484', '#606060', '#101010', '#aabcff', '#6699ff', '#44c0ff', '#1212ff', '#2424d8', '#0c0ca0', '#7c08b8', '#ff84c4'],
  ['#e06464', '#ff0000', '#e03434', '#804000', '#ff8040', '#ff9484', '#ffc044', '#ffff00', '#44ffc0', '#80ff80', '#00ff00', '#50d050', '#30b030', '#108410'],
];

function ChartSelect({ label, value, width }: { label: string; value: string; width: string }) {
  return (
    <div className={`relative ${width}`}>
      <select aria-label={label} defaultValue={value}
              className="h-[22px] w-full appearance-none rounded-sm border border-[#555] bg-[#0c0c0c] pl-[3px] text-[11px] text-[#ddd]">
        <option>{value}</option>
      </select>
      <span className="pointer-events-none absolute right-0.5 top-1/2 flex h-4 w-4 -translate-y-1/2 items-center justify-center rounded-sm bg-linear-to-b from-[#3a3a3a] to-black">
        <svg viewBox="0 0 8 5" className="h-[5px] w-2"><path d="M0 0h8L4 5z" fill="#eee" /></svg>
      </span>
    </div>
  );
}

function OrderButton({ name, stop, diag }: { name: string; stop?: boolean; diag?: boolean }) {
  const up = stop ? 'translate(0 2)' : 'translate(0 14)';
  const down = stop ? 'translate(0 14)' : 'translate(0 2)';
  return (
    <button aria-label={name} className="flex h-[29px] w-7 items-center justify-center rounded-sm border border-[#444] bg-linear-to-b from-[#2c2c2c] to-black">
      <svg viewBox="0 0 25 26" className="h-[26px] w-[25px]">
        <path d="M3 3h13l4 4v15H3z" fill="#10161c" stroke="#aaa" />
        <path d="M16 3v4h4" fill="none" stroke="#aaa" />
        <g transform={up}><path d="M8 0l5 5h-3v5H6V5H3z" fill="#00c400" /></g>
        <g transform={down}><path d="M8 10L3 5h3V0h4v5h3z" fill="#ff1818" /></g>
        {diag
          ? <><path d="M13.500 13.500h9v9h-9z" fill="#101010" stroke="#bbb" /><path d="M13.500 22.500l9-9" stroke="#bbb" /></>
          : <path d="M13 13.500h11M13 16.500h11M13 19.500h11M13 22.500h11" stroke="#c8c8c8" strokeWidth="1.800" />}
      </svg>
    </button>
  );
}

function PriceButton({ tone, big }: { tone: string; big: string }) {
  return (
    <button className={`flex h-7 w-[76px] items-center justify-center rounded-sm text-white ${tone}`}>
      <span className="pt-2 text-[12px] leading-none">12.3</span>
      <span className="text-[21px] leading-none">{big},</span>
      <span className="pb-2 text-[11px] leading-none">8</span>
    </button>
  );
}

function Info() {
  return <span className="flex h-[11px] w-2.5 items-center justify-center border border-[#777] bg-[#383840] font-serif text-[10px] font-bold leading-none text-white">i</span>;
}

const Separator = () => <span className="mx-[3px] h-8 w-px self-center bg-[#444]" />;

function TradingPanel() {
  return (
    <div className="flex h-full items-stretch justify-end pr-1 text-[#ddd]">
      <svg viewBox="0 0 12 46" className="h-[46px] w-3 shrink-0" fill="none">
        <path d="M9 0.500L1.500 6v34L9 45.500" stroke="#555" />
        <path d="M4 21v7l4-3.500z" fill="#eee" />
      </svg>
      <button aria-label="Configurar" className="mt-[13px] flex h-[19px] w-[19px] items-center justify-center rounded-sm border border-[#444] bg-black">
        <Wrench />
      </button>
      <label className="ml-[3px] flex w-[47px] flex-col items-center leading-[14px]">
        Cant
        <input defaultValue="0.5" className="h-[22px] w-full rounded-sm border border-[#555] bg-[#101010] px-1 text-right text-[11px]" />
      </label>
      <Separator />
      <div className="flex flex-col items-center leading-[15px]">
        Límite
        <div className="flex gap-1"><OrderButton name="Límite" /><OrderButton name="Límite variable" diag /></div>
      </div>
      <Separator />
      <div className="flex flex-col items-center leading-[15px]">
        Stop
        <div className="flex gap-1"><OrderButton name="Stop" stop /><OrderButton name="Stop variable" stop diag /></div>
      </div>
      <Separator />
      <div className="flex flex-col items-center leading-[15px]">
        <span className="flex items-center gap-0.5 whitespace-nowrap">Vender F.A.<Info /></span>
        <PriceButton big="86" tone="bg-linear-to-b from-[#d84040] to-[#b82424]" />
      </div>
      <div className="ml-[3px] flex flex-col items-center leading-[15px]">
        <span className="flex items-center gap-0.5 whitespace-nowrap">Comprar F.A.<Info /></span>
        <PriceButton big="87" tone="bg-linear-to-b from-[#20a820] to-[#109010]" />
      </div>
      <Separator />
      <div className="flex w-[62px] flex-col justify-center gap-px">
        {['S', 'L'].map((k) => (
          <div key={k} className="flex items-center">
            <label className="flex items-center gap-[3px]">
              <span className="relative h-[13px] w-[13px]">
                <input type="checkbox" defaultChecked className="block h-[13px] w-[13px] appearance-none border border-[#555] bg-[#333]" />
                <svg viewBox="0 0 13 13" className="pointer-events-none absolute inset-0 h-[13px] w-[13px]" fill="none">
                  <path d="M3 7l3 3.500L11 2" stroke="#eee" strokeWidth="1.800" />
                </svg>
              </span>
              {k}
            </label>
            <input aria-label={`Puntos ${k}`} defaultValue="20"
                   className="ml-auto h-[22px] w-[18px] rounded-sm border border-[#555] bg-[#101010] text-center text-[11px]" />
            <span className="ml-0.5">pts</span>
          </div>
        ))}
      </div>
    </div>
  );
}

function PanelTab({ title, children }: { title: string; children: ReactNode }) {
  return (
    <div className="flex h-[17px] items-center gap-[3px] border-b border-r border-[#555] bg-linear-to-b from-[#2c2c2c] to-[#0c0c0c] pl-1 pr-0.5">
      <span>{title}</span>
      {children}
    </div>
  );
}

const TIME_TICKS: { slot: number; label: string; bold?: boolean }[] = [];
for (const [from, to, hour] of [[4, 40, 5], [44, 84, 1], [98, 134, 5], [138, 182, 1], [186, 186, 1]]) {
  for (let s = from, h = hour; s <= to; s += 4, h += 2) TIME_TICKS.push({ slot: s, label: `${h}:00` });
}
TIME_TICKS.push({ slot: 42, label: '13', bold: true }, { slot: 136, label: '17', bold: true }, { slot: 184, label: '18', bold: true });

function TimeAxis() {
  const left = (slot: number) => ({ left: `${((slotX(slot) - 4) / 2553) * 100}%` });
  return (
    <div className="relative h-[21px] shrink-0 bg-[#1e1e1e] text-[#ddd]">
      {TIME_TICKS.map((t) => (
        <div key={t.slot} style={left(t.slot)}
             className={`absolute top-0 flex -translate-x-1/2 flex-col items-center leading-4 ${t.bold ? 'font-bold' : ''}`}>
          <span className="h-1 w-px bg-[#777]" />
          {t.label}
        </div>
      ))}
      <div style={left(91)} className="absolute top-1 h-4 w-[107px] -translate-x-1/2 whitespace-nowrap border border-[#555] bg-[#ffff00] text-center leading-[14px] text-black">
        lun 16-sep-2019 1:30
      </div>
    </div>
  );
}

function BottomBar() {
  return (
    <div className="flex h-[30px] shrink-0 items-center border-t border-[#555] bg-linear-to-b from-[#222] to-[#080808] pl-0.5 pr-1.5">
      <button className="flex h-[22px] w-[71px] shrink-0 items-center gap-0.5 rounded-sm border border-[#185888] bg-linear-to-b from-[#3088c0] to-[#1c68a0] pl-px text-[#e4eef6]">
        <svg viewBox="0 0 16 16" className="h-4 w-4 shrink-0" fill="#e4eef6">
          <path d="M13 2.500L3 8l10 5.500" stroke="#e4eef6" strokeWidth="1.500" fill="none" />
          <circle cx="12.500" cy="3" r="2.500" /><circle cx="3" cy="8" r="2.500" /><circle cx="12.500" cy="13" r="2.500" />
        </svg>
        Compartir
      </button>
      <button aria-label="Vincular" className="ml-1">
        <svg viewBox="0 0 24 22" className="h-[22px] w-6" fill="none">
          <rect x="2.500" y="3" width="5" height="6" rx="2" stroke="#ddd" strokeWidth="2" />
          <rect x="2.500" y="13" width="5" height="6" rx="2" stroke="#ddd" strokeWidth="2" />
          <path d="M5 8v6" stroke="#ddd" />
          <path d="M13.500 4v13" stroke="#f66" /><path d="M11.500 7h4v7h-4z" fill="#f66" />
          <path d="M19.500 0v15" stroke="#3c3" /><path d="M17.500 3h4v9h-4z" fill="#4d4" />
          <path d="M14 17h7l-3.500 4z" fill="#eee" />
        </svg>
      </button>
      <button aria-label="Listado" className="ml-2">
        <svg viewBox="0 0 14 16" className="h-4 w-3.5">
          <path d="M0.500 0.500h13v15H0.500z" fill="#39424c" stroke="#889" />
          <path d="M2 4h8M2 7h10M2 10h10M5 13h7" stroke="#bbb" />
          <path d="M7 1h6L10 5z" fill="#f22" /><path d="M1 15h6L4 11z" fill="#1b1" />
        </svg>
      </button>
      <button aria-label="Libro de órdenes" className="ml-3">
        <svg viewBox="0 0 18 16" className="h-4 w-[18px]">
          <path d="M1 1.500h9M3 5.500h7M1 9.500h9M3 13.500h7" stroke="#0b0" strokeWidth="3" />
          <path d="M10 1.500h3M10 5.500h7M10 9.500h4M10 13.500h6" stroke="#f44" strokeWidth="3" />
        </svg>
      </button>
      <div className="ml-2 flex h-4 flex-1 items-stretch border-y border-[#555] bg-[#0a0a0a]">
        <button aria-label="Anterior" className="flex w-3.5 items-center justify-center border border-[#555] bg-[#1c1c1c]">
          <svg viewBox="0 0 4 7" className="h-[7px] w-1"><path d="M4 0v7L0 3.500z" fill="#eee" /></svg>
        </button>
        <div className="grid flex-1 grid-cols-[1352fr_758fr_138fr]">
          <span />
          <span className="flex items-center justify-center rounded-xs border-x border-[#555] bg-linear-to-b from-[#262626] to-[#161616]">
            <span className="flex flex-col gap-px"><i className="h-px w-1.5 bg-[#777]" /><i className="h-px w-1.5 bg-[#777]" /><i className="h-px w-1.5 bg-[#777]" /></span>
          </span>
          <span />
        </div>
        <button aria-label="Siguiente" className="flex w-3.5 items-center justify-center border border-[#555] bg-[#1c1c1c]">
          <svg viewBox="0 0 4 7" className="h-[7px] w-1"><path d="M0 0v7l4-3.500z" fill="#eee" /></svg>
        </button>
      </div>
      <div className="ml-2 flex items-center gap-2.5">
        <button aria-label="Estilo">
          <svg viewBox="0 0 18 20" className="h-5 w-[18px]">
            <path d="M3.500 6v13M13.500 0v20" stroke="#ccc" /><path d="M1 10h5v7H1z" fill="#d22" stroke="#ccc" />
            <path d="M10.500 3h6v14h-6z" fill="#1b1" stroke="#ccc" /><path d="M3 18l7-8 5-4" stroke="#eee" strokeWidth="2" fill="none" />
          </svg>
        </button>
        {['', '-', '+'].map((sign) => (
          <button key={sign} aria-label={`Zoom ${sign}`}>
            <svg viewBox="0 0 18 18" className="h-[18px] w-[18px]" fill="none">
              <path d="M10 11l6.500 6" stroke="#ccc" strokeWidth="2.500" />
              <circle cx="7" cy="6.500" r="5.300" fill={sign ? '#0c1216' : '#909aa4'} stroke="#c8ced4" strokeWidth="1.500" />
              {sign && <path d="M4 6.500h6" stroke={K} strokeWidth="2" />}
              {sign === '+' && <path d="M7 3.500v6" stroke={K} strokeWidth="2" />}
              {!sign && <path d="M15.500 1v9M13.500 3l2-2 2 2M1 15.500h8M3 13.500l-2 2 2 2" stroke={K} />}
            </svg>
          </button>
        ))}
      </div>
    </div>
  );
}

function TaskButton({ name, state = '', children }: { name: string; state?: string; children: ReactNode }) {
  return (
    <button aria-label={name} className={`flex h-10 w-[49px] items-center justify-center ${state}`}>
      {children}
    </button>
  );
}

function Taskbar() {
  return (
    <footer className="flex h-10 shrink-0 items-center bg-[#060d16] font-['Open_Sans',sans-serif] text-white">
      <button aria-label="Inicio" className="flex h-10 w-12 items-center justify-center">
        <svg viewBox="0 0 16 16" className="h-4 w-4" fill="#fff">
          <path d="M0 2.200l6.500-0.900v6.200H0zM7.300 1.200L16 0v7.500H7.300zM0 8.300h6.500v6.300L0 13.700zM7.300 8.300H16V16l-8.700-1.200z" />
        </svg>
      </button>
      <label className="flex h-10 w-[344px] items-center bg-[#f2f2f2] pl-[9px] pr-3">
        <svg viewBox="0 0 22 22" className="h-[22px] w-[22px]" fill="none"><circle cx="11" cy="11" r="9" stroke="#111" strokeWidth="2.500" /></svg>
        <input aria-label="Buscar" placeholder="Escribe aquí para buscar"
               className="ml-[9px] min-w-0 flex-1 bg-transparent text-[14px] text-black outline-none placeholder:text-[#444]" />
        <svg viewBox="0 0 16 18" className="h-[18px] w-4" fill="none" stroke="#333">
          <rect x="5.500" y="1" width="5" height="10" rx="2" /><path d="M3 8v3c0 3 10 3 10 0V8M8 13.500V16M5.500 16.500h5" />
        </svg>
      </label>
      <TaskButton name="Vista de tareas">
        <svg viewBox="0 0 18 16" className="h-4 w-[18px]" fill="none" stroke="#ddd" strokeWidth="1.300">
          <path d="M3 4.500h8v7H3zM1.500 0.500v2h11v-2M1.500 15.500v-2h11v2M15.500 1v14M14 5h3v3h-3z" />
        </svg>
      </TaskButton>
      <TaskButton name="Edge" state="border-b-2 border-[#76b9ed]">
        <svg viewBox="0 0 22 22" className="h-[22px] w-[22px]" fill="#0d84e0">
          <path d="M1 10C2 4 6 0.800 11.500 0.800c6 0 9.800 4.400 9.300 11.700H8c0.200 3.200 2.500 4.800 6 4.800 2.300 0 4-0.500 5.800-1.500v4.200c-2 1-4 1.500-6.800 1.500-6 0-10-3.700-10-9 0-3 1.500-5.500 4.300-7C4.500 6 2.500 7.500 1 10zM8.200 9h7.300c0-2.500-1.300-4-3.500-4S8.600 6.500 8.200 9z" />
        </svg>
      </TaskButton>
      <TaskButton name="Tienda">
        <svg viewBox="0 0 24 24" className="h-6 w-6" fill="none">
          <path d="M1 6.500h22V22c0 1-22 1-22 0z" fill="#fff" /><path d="M8 6.500C8 0.500 16 0.500 16 6.500" stroke="#fff" strokeWidth="1.500" />
          <path d="M6.500 9.500h5v5h-5z" fill="#f25022" /><path d="M12.500 9.500h5v5h-5z" fill="#7fba00" />
          <path d="M6.500 15.500h5v5h-5z" fill="#00a4ef" /><path d="M12.500 15.500h5v5h-5z" fill="#ffb900" />
        </svg>
      </TaskButton>
      <TaskButton name="Correo">
        <svg viewBox="0 0 24 20" className="h-5 w-6"><path d="M0 7L12 0l12 7v13H0z" fill="#fff" /><path d="M2 7.500h20L14 13l1 3-5-3.500z" fill="#060d16" /></svg>
      </TaskButton>
      <TaskButton name="Explorador" state="border-b-2 border-[#76b9ed]">
        <svg viewBox="0 0 22 20" className="h-5 w-[22px]">
          <path d="M0 1h8l2 2h12v16H0z" fill="#ffd970" /><path d="M0 5h22v3H0z" fill="#fff0b8" /><path d="M5 19v-8h12v8h-3.500v-4h-5v4z" fill="#38a8e8" />
        </svg>
      </TaskButton>
      <TaskButton name="Grabador" state="border-b-2 border-[#76b9ed]">
        <svg viewBox="0 0 24 24" className="h-6 w-6"><circle cx="16.500" cy="7.500" r="6" fill="#1d78e8" /><circle cx="7.500" cy="16.500" r="6" fill="#d42c34" /></svg>
      </TaskButton>
      <TaskButton name="ProRealTime" state="border-b-2 border-[#76b9ed] bg-[#343a42]">
        <svg viewBox="0 0 22 24" className="h-6 w-[22px]">
          <path d="M5.500 7v16" stroke="#b33" /><path d="M1.500 10h8v11h-8z" fill="#f05858" /><path d="M16.500 0v23" stroke="#2a2" /><path d="M12.500 4h8v15h-8z" fill="#4ce04c" />
        </svg>
      </TaskButton>

      <div className="ml-auto flex items-center gap-3 text-[11px]">
        <svg viewBox="0 0 16 16" className="mr-3 h-4 w-4" fill="none" stroke="#eee" strokeWidth="1.300">
          <circle cx="11" cy="3.500" r="2.500" /><circle cx="5" cy="8" r="2.200" /><path d="M1 15c0.500-5 7-6 8-1M9 8.500c2-3 5.500-2 6 2.500" />
        </svg>
        <svg viewBox="0 0 12 8" className="h-2 w-3" fill="none" stroke="#eee" strokeWidth="1.300"><path d="M1 7l5-5 5 5" /></svg>
        <svg viewBox="0 0 14 14" className="h-3.5 w-3.5" fill="none" stroke="#ddd" strokeWidth="1.300">
          <path d="M1 13A12 12 0 0 1 13 1M4 13A9 9 0 0 1 13 4.500M7 13a6 6 0 0 1 6-5.500M10 13a3 3 0 0 1 3-2.500" />
        </svg>
        <svg viewBox="0 0 16 14" className="-ml-1 h-3.5 w-4" fill="none" stroke="#eee" strokeWidth="1.200">
          <path d="M1 5h2.500L7 2v10L3.500 9H1zM9 5c1 1 1 3 0 4M11 3c2 2 2 6 0 8M13 1.500c3 3 3 8 0 11" />
        </svg>
        <span>ESP</span>
        <time className="flex w-[66px] flex-col items-center text-[12px] leading-[18px]"><span>14:41</span><span>18/09/2019</span></time>
        <div className="relative h-[26px] w-[26px]">
          <svg viewBox="0 0 16 16" className="absolute left-0.5 top-1 h-4 w-4"><path d="M0 0h16v13H9l-3 3v-3H0z" fill="#fff" /><path d="M3 3.500h10M3 6.500h10M3 9.500h6" stroke="#060d16" /></svg>
          <span className="absolute bottom-0 right-0 flex h-4 w-4 items-center justify-center rounded-full border border-[#888] bg-[#2b333c] text-[11px]">1</span>
        </div>
        <span className="h-10 w-1 border-l border-[#555]" />
      </div>
    </footer>
  );
}

export default function App() {
  return (
    <div className="flex h-screen w-full flex-col overflow-hidden bg-black font-['Liberation_Sans',Arial,sans-serif] text-[11px] leading-none text-[#ddd]">
      <main className="flex min-h-0 flex-1 flex-col border-b-4 border-l-4 border-r-[3px] border-[#757575] bg-[#1e1e1e]">
        {/* Título */}
        <header className="-ml-0.5 flex h-[26px] shrink-0 items-center border-b border-t border-[#4c4c4c] bg-linear-to-b from-[#909090] to-[#707070] font-bold text-white">
          <svg viewBox="0 0 16 16" className="ml-0.5 h-4 w-4" fill="none">
            <path d="M4 3v12M12 0v16" stroke="#fff" /><path d="M1 6h6v7H1z" fill="#fff" /><path d="M9.500 3.500h5v9h-5z" fill="#828282" stroke="#fff" />
          </svg>
          <svg viewBox="0 0 8 5" className="ml-1 h-[5px] w-2"><path d="M0 0h8L4 5z" fill="#fff" /></svg>
          <h1 className="ml-[3px] text-[11px]">DAX</h1>
          <span className="ml-3 flex h-3 w-3 items-center justify-center bg-[#33333c] font-serif text-[11px]">i</span>
          <span className="ml-[9px] flex h-[15px] items-center border border-[#50e850] bg-linear-to-b from-[#38e038] to-[#28c028]">12.387,3 (+0,02%)</span>
          <span className="ml-[3px]">14:41:30 Alemania 30 Cash (1€)</span>
          <div className="ml-auto flex items-center gap-1.5 pr-1">
            <button aria-label="Teclado">
              <svg viewBox="0 0 20 14" className="h-3.5 w-5"><rect width="20" height="14" rx="1.500" fill="#fff" /><path d="M3 4.500h14M3 7.500h14" stroke="#666" strokeDasharray="1.500 1" strokeWidth="1.500" /><path d="M6 11h8" stroke="#555" strokeWidth="1.500" /></svg>
            </button>
            <button aria-label="Minimizar"><svg viewBox="0 0 9 10" className="h-2.5 w-[9px]"><path d="M0 8.500h9" stroke="#fff" strokeWidth="2" /></svg></button>
            <button aria-label="Restaurar"><svg viewBox="0 0 10 10" className="h-2.5 w-2.5" fill="none" stroke="#fff" strokeWidth="1.200"><path d="M3.500 3V1h6v5h-2M1 4h6v5H1z" /></svg></button>
            <button aria-label="Cerrar"><svg viewBox="0 0 10 10" className="h-2.5 w-2.5"><path d="M1 0.500l8 9M9 0.500l-8 9" stroke="#fff" strokeWidth="1.800" /></svg></button>
          </div>
        </header>

        {/* Estado de la cuenta */}
        <section className="grid h-[22px] shrink-0 grid-cols-[423fr_537fr_553fr_519fr_521fr] items-center whitespace-nowrap border-b border-[#4c4c4c] bg-[#0a0a0a]">
          <span />
          <span className="flex items-center">Órdenes:<b className="ml-1 mr-0.5">0</b><CancelSheet /><b className="ml-2">/ 0</b><Gears /></span>
          <span className="flex items-center">Posición:<b className="ml-2.5 text-[#e83434]">-0,5</b><CancelSheet red /><b className="ml-2">/ 0</b><Gears /></span>
          <span>Gan latente: <b className="ml-1 text-[#20c020]">0,30 €</b></span>
          <span>Gan día: <b className="ml-0.5 text-[#20c020]">17,70 €</b></span>
        </section>

        {/* Herramientas */}
        <nav className="grid h-12 shrink-0 grid-cols-[1016fr_405fr_397fr_735fr] items-center border-b border-[#555] bg-linear-to-b from-[#0a0a0a] to-[#222]">
          <div className="flex items-center pl-[7px]">
            {TOOLS.map((t) => (
              <button key={t.name} aria-label={t.name} className={`h-[26px] w-[26px] shrink-0 ${t.on ? 'bg-[#686868]' : ''}`}>
                <svg viewBox="0 0 26 26" className="h-[26px] w-[26px]">{t.art}</svg>
              </button>
            ))}
            <div className="ml-px grid shrink-0 grid-cols-14">
              {PALETTE.flat().map((c, i) => (
                <button key={c + i} aria-label={`Color ${c}`} style={{ backgroundColor: c }}
                        className={`w-[11px] rounded-xs border border-black/40 bg-linear-to-b from-white/30 to-transparent ${i === 5 ? 'relative -mt-0.5 h-[14px] -mb-px' : 'h-[11px]'}`} />
              ))}
            </div>
          </div>
          <ChartSelect label="Unidades" value="200 unidades" width="w-[100px]" />
          <ChartSelect label="Periodo" value="30 minutos" width="w-[93px]" />
          <div className="flex h-full items-center justify-between">
            <button aria-label="Añadir indicador" className="flex h-[26px] w-[50px] items-center rounded-sm border border-[#555] bg-[#151515]">
              <svg viewBox="0 0 35 24" className="h-6 w-[35px]" fill="none">
                <path d="M0 0h35v24H0z" fill="#343434" />
                <path d="M1 16c8 1 8-13 15-11s6 13 17 0" stroke="#a33" strokeWidth="1.500" />
                <path d="M3 12c6-7 9-6 13 0s8 6 16-3" stroke="#2a7a2a" strokeWidth="1.500" />
                <path d="M3 6.500h8M7 2.500v8" stroke="#eef" strokeWidth="2.500" />
                <path d="M13 18v-4h-2.500L14 10l3.500 4H15v4z" fill="#1c1" /><path d="M25 3v4h-2.500L26 11l3.500-4H27V3z" fill="#e22" />
                <path d="M3 22v-4h4v4M14 22v-3h4v3M29 22v-4h4v4" fill="#0b0" /><path d="M9 22v-3h3v3M22 22v-2h4v2" fill="#d22" />
                <path d="M1 22.500h32" stroke="#22c" />
              </svg>
              <svg viewBox="0 0 8 5" className="ml-1 h-[5px] w-2"><path d="M0 0h8L4 5z" fill="#eee" /></svg>
            </button>
            <TradingPanel />
          </div>
        </nav>

        {/* Precio */}
        <section className="flex min-h-0 flex-1">
          <div className="relative min-w-0 flex-1 border-b border-r border-[#555] bg-linear-to-b from-[#323232] to-[#0f0f0f]">
            <PriceChart />
            <div className="relative flex items-center gap-1">
              <PanelTab title="Precio"><Wrench /><WindowIcon /><CloseIcon /><SheetArrow down /><SheetArrow /></PanelTab>
              <span className="text-[#ccc]">Día:+Alto 12.400,9 +Bajo 12.350,4</span>
            </div>
            {READOUTS.map((r) => <Readout key={r.label} {...r} />)}
            <table style={at(948, 355, 96, 921)} className="absolute w-[186px] border-separate border-spacing-0 rounded-sm border border-[#4a4a4a] bg-[#222222]/85 py-0.5 text-[#ddd]">
              <tbody>
                {OHLC.map(([label, value]) => (
                  <tr key={label} className={label.startsWith('Var.') ? 'text-[#e03c3c]' : ''}>
                    <th className="h-3.5 whitespace-nowrap p-0 pl-0.5 text-left font-normal">{label}</th>
                    <td className="h-3.5 p-0 pr-0.5 text-right">{value}</td>
                  </tr>
                ))}
              </tbody>
            </table>
            {/* Posición abierta */}
            <div style={at(5, 413, 96, 921)} className="absolute">
              <div className="flex h-5 w-[105px] items-stretch">
                <span className="flex flex-1 items-center justify-center whitespace-nowrap border border-[#e04040] bg-linear-to-b from-[#c84040] to-[#a82020] text-white">-0,5 @ 12.388,4</span>
                <button aria-label="Cerrar posición" className="flex w-[18px] items-center justify-center rounded-r-sm border border-[#555] bg-[#333]">
                  <svg viewBox="0 0 8 8" className="h-2 w-2"><path d="M1 1l6 6M7 1L1 7" stroke="#ff5050" strokeWidth="2.500" /></svg>
                </button>
              </div>
              <div className="flex h-[19px] w-[70px] items-center rounded-b-sm border border-[#555] bg-[#303030] text-[#22c522]">
                <span className="flex h-full items-center border-r border-[#555] px-1">+0,6</span>
                <span className="pl-1">0,30 €</span>
              </div>
            </div>
            <p className="absolute bottom-0 left-0.5 leading-[13px]">© IT-Finance.com&nbsp; <i>Datos recibidos indicativos</i></p>
          </div>
          <Axis ticks={PRICE_TICKS} top={96} height={922}>
            {TAGS.map((t) => (
              <div key={t.text} style={{ top: `${((t.y - 96) / 922) * 100}%` }}
                   className={`absolute left-[3px] flex flex-col justify-center border pl-px leading-3 ${t.tone}`}>
                <span>{t.text}</span>
                {t.sub && <span>{t.sub}</span>}
              </div>
            ))}
          </Axis>
        </section>

        {/* Volumen */}
        <section className="mt-0.5 flex h-[89px] shrink-0">
          <div className="relative min-w-0 flex-1 border-y border-r border-[#555] bg-linear-to-b from-[#111] to-[#090909]">
            <BarChart id="v" viewBox="4 1021 2502 87" base={1108} values={VOLUME} cursorTo={[1021, 1108]} />
            <div className="relative flex"><PanelTab title="Volumen"><Wrench /><WindowIcon /><BellSmall /><CloseIcon /></PanelTab></div>
            <div style={at(1071, 1088, 1021, 87)} className="absolute flex h-[19px] w-16 items-center justify-between rounded-sm border border-[#d86060] bg-[#222]/75 px-0.5 text-[#d86060]">
              <span>Volumen</span><span>0</span>
            </div>
          </div>
          <Axis ticks={VOLUME_TICKS} top={1020} height={89}>
            <div className="absolute bottom-0.5 left-[3px] h-4 border border-[#444] bg-black px-px leading-[14px] text-[#e05050]">1.264</div>
          </Axis>
        </section>

        {/* Chaikin */}
        <section className="mt-0.5 flex h-[234px] shrink-0">
          <div className="relative min-w-0 flex-1 border-y border-r border-[#555] bg-linear-to-b from-[#0b0b0b] to-black">
            <BarChart id="c" viewBox="4 1112 2502 232" base={1229} values={CHAIKIN} cursorTo={[1112, 1344]} />
            <div className="relative flex"><PanelTab title="Chaikin, flujo dinero (21)"><Wrench /><WindowIcon /><CloseIcon /></PanelTab></div>
            <div style={at(1033, 1222, 1112, 232)} className="absolute flex h-5 w-[102px] items-center justify-between rounded-sm border border-[#d86060] bg-[#222]/75 px-0.5 text-[#d86060]">
              <span>CFD (21)</span><span>-0,01142</span>
            </div>
          </div>
          <Axis ticks={CHAIKIN_TICKS} top={1111} height={234}>
            <div className="absolute left-[3px] top-[91px] h-4 border border-[#444] bg-black px-px leading-[14px] text-[#30c830]">0,0906</div>
          </Axis>
        </section>

        <TimeAxis />
        <BottomBar />
      </main>
      <Taskbar />
    </div>
  );
}
